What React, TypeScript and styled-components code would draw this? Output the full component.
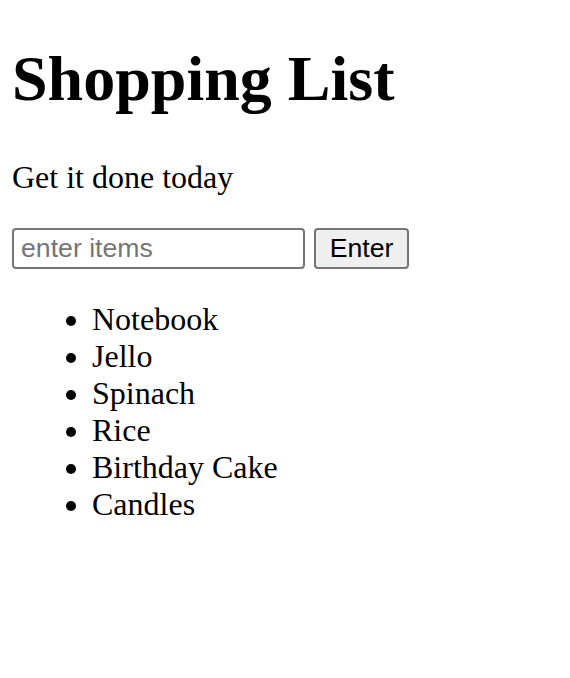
import React, { useState } from "react";
import styled, { createGlobalStyle } from "styled-components";

const GlobalStyle = createGlobalStyle`
  body {
    margin: 12px;
    font-family: "Liberation Serif", "Times New Roman", serif;
    font-size: 32px;
    color: #000;
    background: #fff;
  }
`;

const Title = styled.h1`
  font-size: 64px;
  font-weight: 700;
  margin: 30px 0 42.88px;
`;

const Tagline = styled.p`
  margin: 32px 0;
`;

const EntryForm = styled.form`
  display: flex;
  align-items: center;
  gap: 9px;
  margin: 0;
`;

const ItemInput = styled.input`
  box-sizing: border-box;
  width: 293px;
  height: 41px;
  padding: 0 7px;
  border: 2px solid #767676;
  border-radius: 4px;
  font-family: "Liberation Sans", Arial, sans-serif;
  font-size: 26.67px;
  color: #000;
  background: #fff;
  outline: none;
  &::placeholder {
    color: #757575;
  }
`;

const EnterButton = styled.button`
  box-sizing: border-box;
  width: 95px;
  height: 41px;
  padding: 0;
  border: 2px solid #767676;
  border-radius: 4px;
  background: #efefef;
  font-family: "Liberation Sans", Arial, sans-serif;
  font-size: 26.67px;
  color: #000;
  cursor: pointer;
`;

const ItemList = styled.ul`
  margin: 32px 0;
  padding-left: 80px;
  list-style: disc;
`;

const Item = styled.li`
  line-height: 37px;
`;

export default function App() {
  const [items, setItems] = useState<string[]>([
    "Notebook",
    "Jello",
    "Spinach",
    "Rice",
    "Birthday Cake",
    "Candles",
  ]);
  const [text, setText] = useState("");

  const add = (e: React.FormEvent) => {
    e.preventDefault();
    if (!text.trim()) return;
    setItems([...items, text.trim()]);
    setText("");
  };

  return (
    <>
      <GlobalStyle />
      <Title>Shopping List</Title>
      <Tagline>Get it done today</Tagline>
      <EntryForm onSubmit={add}>
        <ItemInput
          placeholder="enter items"
          value={text}
          onChange={(e) => setText(e.target.value)}
        />
        <EnterButton type="submit">Enter</EnterButton>
      </EntryForm>
      <ItemList>
        {items.map((item, i) => (
          <Item key={i}>{item}</Item>
        ))}
      </ItemList>
    </>
  );
}
